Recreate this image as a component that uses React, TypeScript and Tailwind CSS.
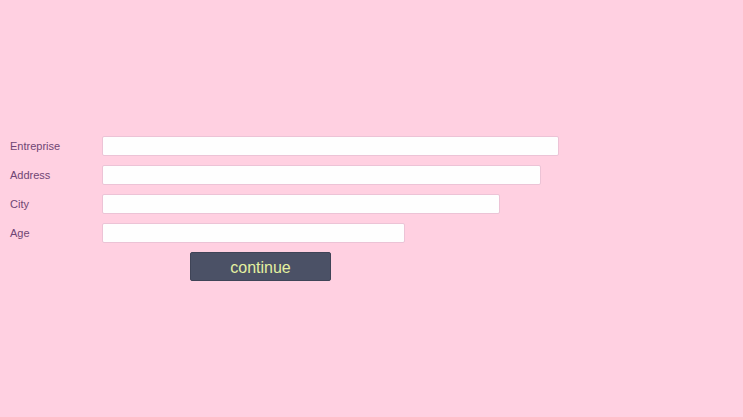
const fields = [
  { label: 'Entreprise', width: 'w-[457px]' },
  { label: 'Address', width: 'w-[439px]' },
  { label: 'City', width: 'w-[398px]' },
  { label: 'Age', width: 'w-[303px]' },
];

export default function App() {
  return (
    <div className="min-h-[417px] w-full bg-[#ffd0e1] pt-[136px] pl-[10px] font-['Liberation_Sans',Arial,sans-serif]">
      <div className="flex flex-col gap-[9px]">
        {fields.map((f) => (
          <div key={f.label} className="flex items-center">
            <label className="w-[92px] pt-[1px] text-[11px] leading-none text-[#6f4674]">{f.label}</label>
            <input
              type="text"
              className={`h-[20px] ${f.width} rounded-[2px] border border-[#ecc3d6] bg-[#fefefe] outline-none`}
            />
          </div>
        ))}
      </div>
      <div className="mt-[9px] pl-[180px]">
        <button className="h-[29px] w-[141px] rounded-[2px] border border-[#3f4457] bg-[#4b5166] pt-[3px] text-[16px] leading-none text-[#e4f0a0]">
          continue
        </button>
      </div>
    </div>
  );
}
